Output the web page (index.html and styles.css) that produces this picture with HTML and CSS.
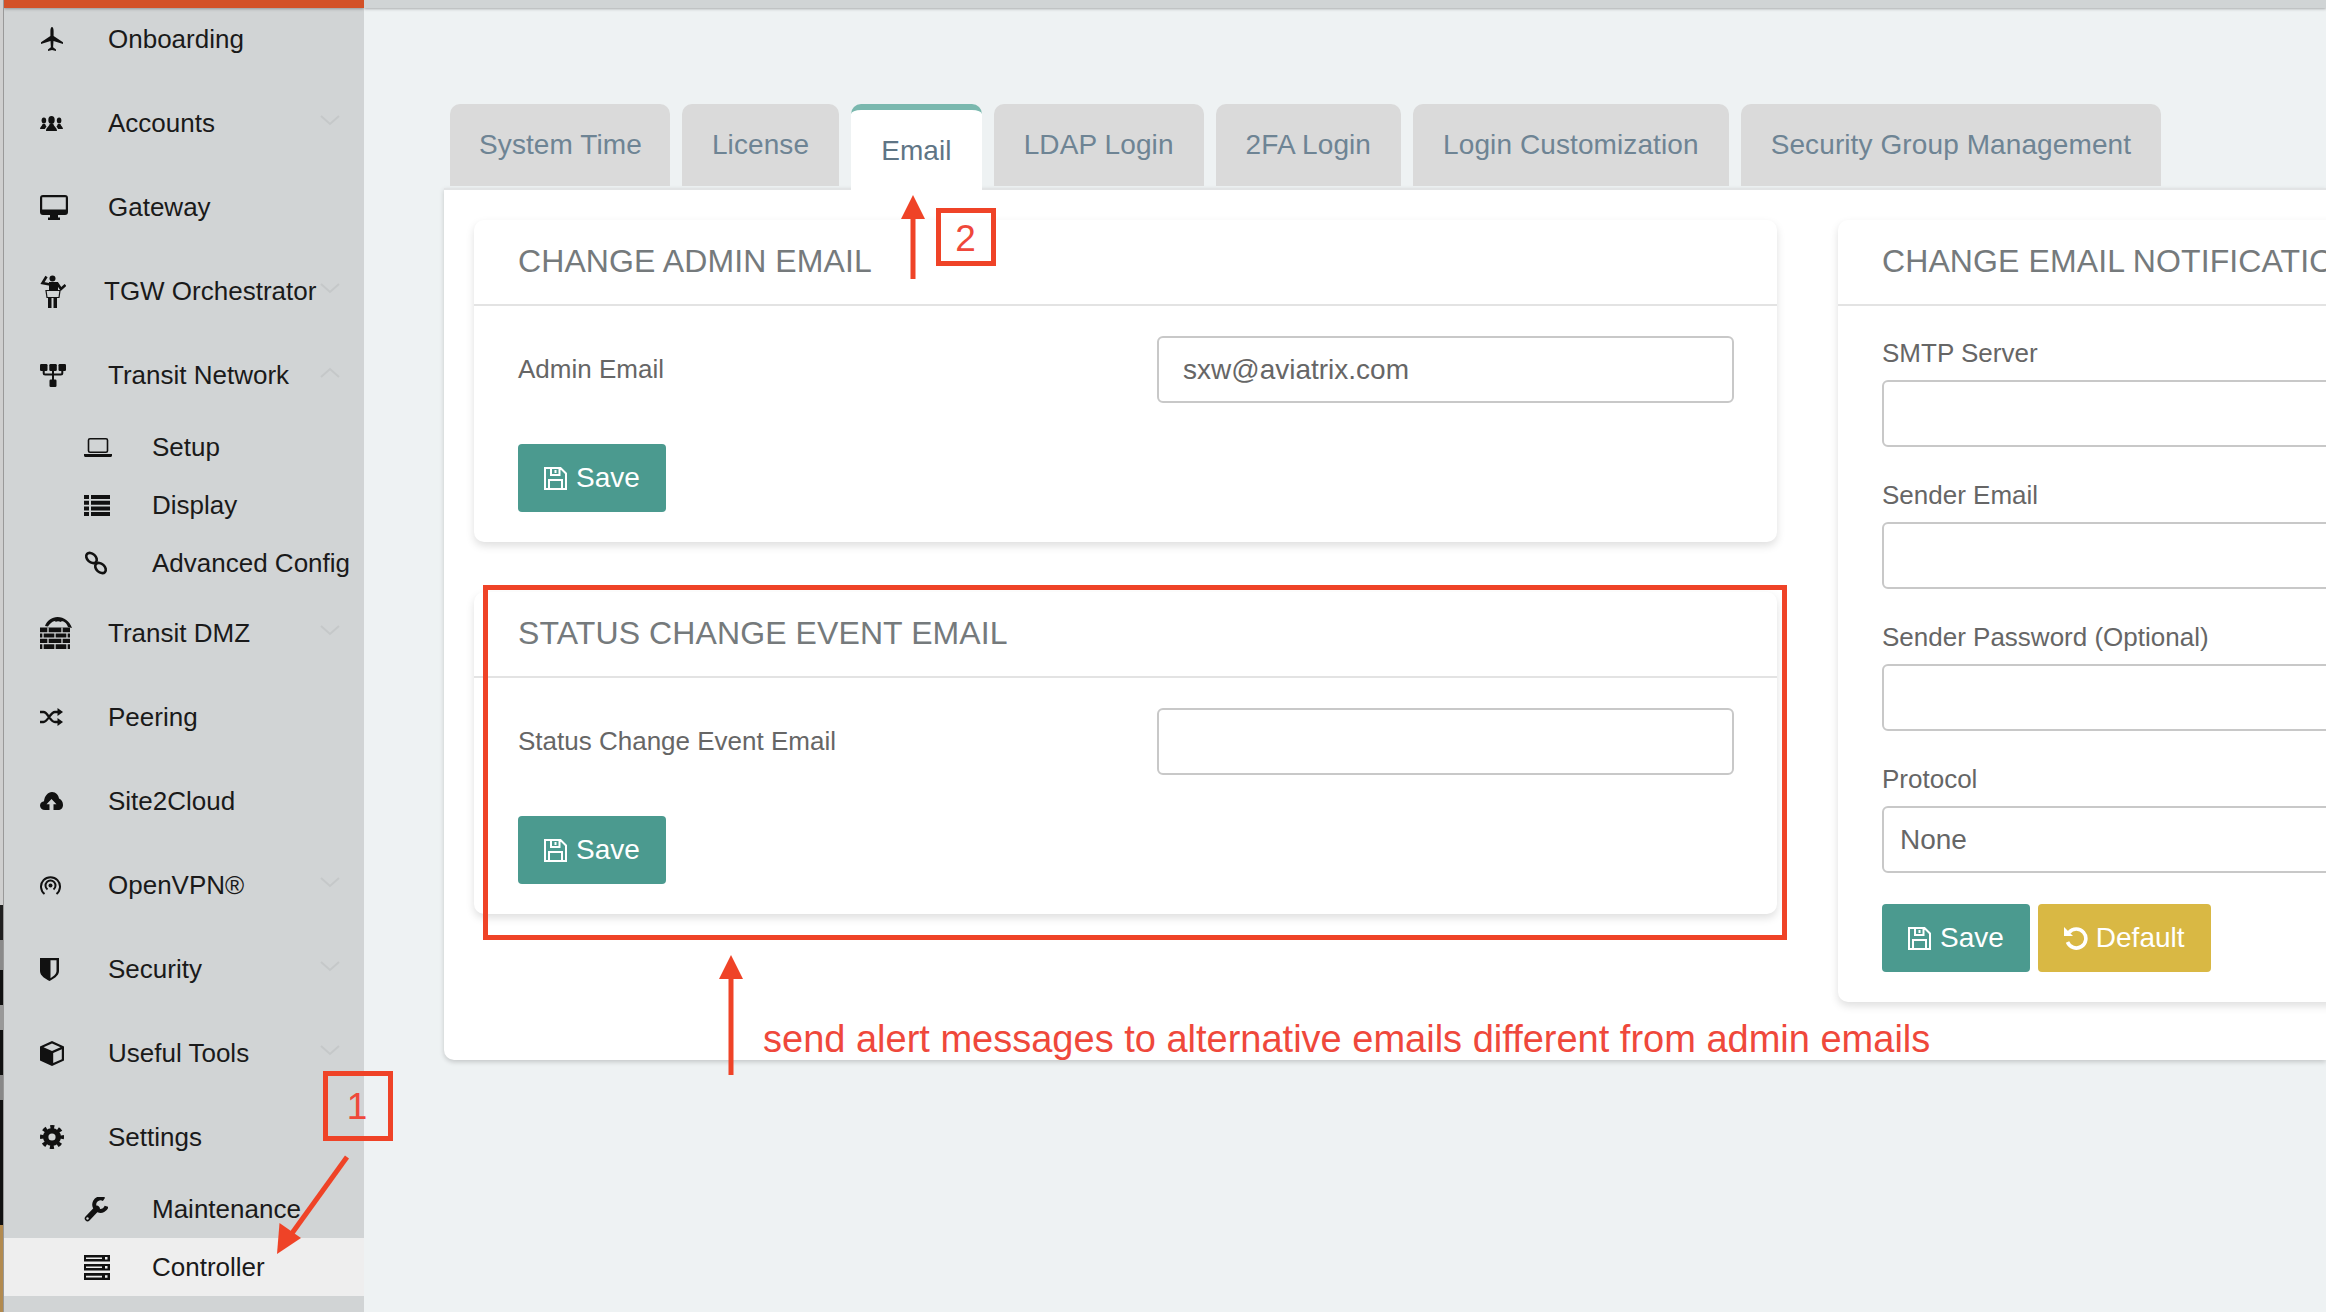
FILE: index.html
```html
<!DOCTYPE html>
<html lang="en">
<head>
    <meta charset="UTF-8">
    <meta name="viewport" content="width=device-width, initial-scale=1.0">
    <title>Controller Settings - Email</title>
    <link rel="stylesheet" href="styles.css">
</head>
<body>
    <div class="screen-edge"></div>

    <aside class="sidebar">
        <div class="brand-bar"></div>
        <ul class="menu">
            <li class="menu-item">
                <svg class="menu-icon" width="24" height="24" viewBox="0 0 24 24"><path d="M12 0c1 0 1.600 2 1.600 4v5L23 15.200v1.900l-9.500-3-.4 6.200 2.900 2.300V24L12 23.100 8 24v-1.400l2.900-2.300-.4-6.200-9.500 3v-1.900L10.400 9V4c0-2 .6-4 1.600-4z"/></svg>
                <span>Onboarding</span>
            </li>
            <li class="menu-item">
                <svg class="menu-icon" width="23" height="15" viewBox="0 0 23 15"><ellipse cx="11.500" cy="4" rx="3.200" ry="4"/><path d="M6 15c0-3.500 3-4.500 3.600-7h3.800c.6 2.500 3.600 3.500 3.600 7z"/><ellipse cx="3.900" cy="4.500" rx="2.300" ry="3"/><path d="M0 13c0-2 2-2.800 2.600-5h2.600c.2 1.500 1.300 2.500 1.300 2.500L4.800 13z"/><ellipse cx="19.100" cy="4.500" rx="2.300" ry="3"/><path d="M23 13c0-2-2-2.800-2.600-5h-2.600c-.2 1.500-1.300 2.500-1.300 2.500l1.700 2.500z"/></svg>
                <span>Accounts</span>
                <svg class="chevron" width="20" height="11" viewBox="0 0 20 11"><path d="M1 1l9 8 9-8"/></svg>
            </li>
            <li class="menu-item">
                <svg class="menu-icon" width="28" height="25" viewBox="0 0 28 25"><path fill-rule="evenodd" d="M3 0h22a3 3 0 0 1 3 3v14a3 3 0 0 1-3 3H3a3 3 0 0 1-3-3V3a3 3 0 0 1 3-3zm-.8 2.200v12.300h23.600V2.200z"/><path d="M10 20h8v2.500h2V25H8v-2.500h2z"/></svg>
                <span>Gateway</span>
            </li>
            <li class="menu-item menu-item-tgw">
                <svg class="menu-icon" width="26" height="33" viewBox="0 0 26 33"><circle cx="12.500" cy="3.500" r="3"/><path d="M9 7h9v8H9z"/><path class="line" d="M10 9.500L2.500 8l4-6.500" stroke-width="2.600"/><path class="line" d="M17 8l4 6 4.500-4" stroke-width="2.600"/><path class="line" d="M6 15.500h14l-1 7H7z" stroke-width="1.200"/><path d="M8 22.500h3.500V33H8zM13.500 22.500H17V33h-3.500z"/></svg>
                <span>TGW Orchestrator</span>
                <svg class="chevron" width="20" height="11" viewBox="0 0 20 11"><path d="M1 1l9 8 9-8"/></svg>
            </li>
            <li class="menu-item">
                <svg class="menu-icon" width="26" height="23" viewBox="0 0 26 23"><rect width="7.500" height="7" rx="1.200"/><rect x="9.300" width="7.500" height="7" rx="1.200"/><rect x="18.500" width="7.500" height="7" rx="1.200"/><rect x="9.500" y="15.500" width="7" height="7.500" rx="1.200"/><path class="line" d="M3.700 6v3c0 1 .6 1.500 1.500 1.500h15.600c.9 0 1.500-.5 1.500-1.500V6M13 6v10" stroke-width="2"/></svg>
                <span>Transit Network</span>
                <svg class="chevron" width="20" height="11" viewBox="0 0 20 11"><path d="M1 10l9-8 9 8"/></svg>
            </li>
            <li>
                <ul class="submenu">
                    <li class="submenu-item">
                        <svg class="menu-icon" width="28" height="19" viewBox="0 0 28 19"><rect class="line" x="4.500" y=".8" width="19" height="13.500" rx="1.500" stroke-width="1.600"/><path d="M0 16h28v1.500c0 .8-.6 1.500-1.500 1.500h-25C.6 19 0 18.300 0 17.500z"/></svg>
                        <span>Setup</span>
                    </li>
                    <li class="submenu-item">
                        <svg class="menu-icon" width="26" height="21" viewBox="0 0 26 21"><path d="M0 0h5v4H0zM7 0h19v4H7zM0 5.700h5v4H0zM7 5.700h19v4H7zM0 11.400h5v4H0zM7 11.400h19v4H7zM0 17h5v4H0zM7 17h19v4H7z"/></svg>
                        <span>Display</span>
                    </li>
                    <li class="submenu-item">
                        <svg class="menu-icon" width="24" height="24" viewBox="0 0 24 24"><ellipse class="line" cx="7.500" cy="7" rx="6" ry="4.200" transform="rotate(42 7.500 7)" stroke-width="2.600"/><ellipse class="line" cx="16.500" cy="17" rx="6" ry="4.200" transform="rotate(42 16.500 17)" stroke-width="2.600"/></svg>
                        <span>Advanced Config</span>
                    </li>
                </ul>
            </li>
            <li class="menu-item">
                <svg class="menu-icon" width="32" height="32" viewBox="0 0 32 32"><path d="M5 9C7 3.500 12 0 17.500 0 24 0 29.500 4 32 11l-4-1c-1-3-3-5-4.500-5.500C21 3 16 3 13 4.500 10.500 6 9 8 8 9.500z"/><path d="M15 2c3-1 6-1 8 .5L21 5c-2-1-4-1-5.500 0z"/><path d="M0 10.500h30V32H0z"/><path class="mortar" d="M0 15.800h30M0 21.200h30M0 26.700h30M8 10.500v5.300M22 10.500v5.300M3 15.800v5.400M15 15.800v5.400M27 15.800v5.400M8 21.200v5.500M22 21.200v5.500M3 26.700V32M15 26.700V32M27 26.700V32"/></svg>
                <span>Transit DMZ</span>
                <svg class="chevron" width="20" height="11" viewBox="0 0 20 11"><path d="M1 1l9 8 9-8"/></svg>
            </li>
            <li class="menu-item">
                <svg class="menu-icon" width="23" height="18" viewBox="0 0 23 18"><path class="line" d="M0 4h3.500C8 4 10 14 15 14h3M0 14h3.500C8 14 10 4 15 4h3" stroke-width="2.300"/><path d="M17.500 0L23 4l-5.500 4zM17.500 10l5.500 4-5.500 4z"/></svg>
                <span>Peering</span>
            </li>
            <li class="menu-item">
                <svg class="menu-icon" width="23" height="18" viewBox="0 0 23 18"><path d="M5 18c-3 0-5-2-5-4.500S2 9.500 4 9.300C4.500 4 8 0 12 0c4 0 6.500 3 7 6.500 2.500 1 4 3.500 4 6.500s-2 5-5 5z"/><path class="cut" d="M11.500 7l5 5.200h-3V18h-4v-5.800h-3z"/></svg>
                <span>Site2Cloud</span>
            </li>
            <li class="menu-item">
                <svg class="menu-icon" width="21" height="20" viewBox="0 0 21 20"><path class="line" d="M4.500 19a9.500 9.500 0 1 1 12 0" stroke-width="2"/><path class="line" d="M7.500 14.500a5 5 0 1 1 6 0" stroke-width="2"/><circle cx="10.500" cy="10.500" r="2"/></svg>
                <span>OpenVPN®</span>
                <svg class="chevron" width="20" height="11" viewBox="0 0 20 11"><path d="M1 1l9 8 9-8"/></svg>
            </li>
            <li class="menu-item">
                <svg class="menu-icon" width="19" height="23" viewBox="0 0 19 23"><path d="M0 0h19v13c0 5-6 8-9.500 10C6 21 0 18 0 13z"/><path class="cut" d="M10.500 2.300h6V13c0 3-3.500 5.700-6 7.200z"/></svg>
                <span>Security</span>
                <svg class="chevron" width="20" height="11" viewBox="0 0 20 11"><path d="M1 1l9 8 9-8"/></svg>
            </li>
            <li class="menu-item">
                <svg class="menu-icon" width="24" height="25" viewBox="0 0 24 25"><path d="M12 0l12 5.500v14L12 25 0 19.500v-14z"/><path class="cut" d="M12 2.500l8.500 3.800L12 10 3.500 6.300zM13.200 12l8.600-3.800v10l-8.600 3.900z"/></svg>
                <span>Useful Tools</span>
                <svg class="chevron" width="20" height="11" viewBox="0 0 20 11"><path d="M1 1l9 8 9-8"/></svg>
            </li>
            <li class="menu-item">
                <svg class="menu-icon" width="24" height="24" viewBox="0 0 24 24"><circle cx="12" cy="12" r="9"/><circle class="line" cx="12" cy="12" r="10" stroke-width="4" stroke-dasharray="4 3.850" stroke-dashoffset="2"/><circle class="cut" cx="12" cy="12" r="3.600"/></svg>
                <span>Settings</span>
            </li>
            <li>
                <ul class="submenu">
                    <li class="submenu-item">
                        <svg class="menu-icon" width="24" height="25" viewBox="0 0 24 25"><path class="line" d="M3.500 21.500l9.500-10" stroke-width="5.500" stroke-linecap="round"/><path class="line" d="M20 2.300a6.300 6.300 0 1 0 2.600 7" stroke-width="4"/><circle class="cut" cx="3.500" cy="21.500" r="1.200"/></svg>
                        <span>Maintenance</span>
                    </li>
                    <li class="submenu-item active">
                        <svg class="menu-icon" width="26" height="25" viewBox="0 0 26 25"><rect width="26" height="6.500"/><rect y="9" width="26" height="6.500"/><rect y="18" width="26" height="7"/><path class="strip" d="M2 2.500h16v1.600H2zM2 11.500h16v1.600H2zM2 20.800h16v1.600H2zM21 2h2.500v2.500H21zM21 11h2.500v2.500H21zM21 20.300h2.500v2.500H21z"/></svg>
                        <span>Controller</span>
                    </li>
                </ul>
            </li>
        </ul>
    </aside>

    <main class="main">
        <div class="topbar"></div>

        <ul class="tabs">
            <li class="tab">System Time</li>
            <li class="tab">License</li>
            <li class="tab active">Email</li>
            <li class="tab">LDAP Login</li>
            <li class="tab">2FA Login</li>
            <li class="tab">Login Customization</li>
            <li class="tab">Security Group Management</li>
        </ul>

        <section class="panel">
            <div class="column">
                <div class="card">
                    <h3 class="card-title">CHANGE ADMIN EMAIL</h3>
                    <form class="card-body">
                        <div class="inline-field">
                            <label for="admin-email">Admin Email</label>
                            <input type="text" id="admin-email" value="sxw@aviatrix.com">
                        </div>
                        <div class="actions">
                            <button type="button" class="btn btn-save">
                                <svg class="btn-icon" width="23" height="23" viewBox="0 0 23 23"><path d="M1 1h15.500L22 6.500V22H1zM7 1v7h8.500V1M5 22v-9h13v9M11.500 3v3"/></svg>
                                Save
                            </button>
                        </div>
                    </form>
                </div>

                <div class="card">
                    <h3 class="card-title">STATUS CHANGE EVENT EMAIL</h3>
                    <form class="card-body">
                        <div class="inline-field">
                            <label for="event-email">Status Change Event Email</label>
                            <input type="text" id="event-email">
                        </div>
                        <div class="actions">
                            <button type="button" class="btn btn-save">
                                <svg class="btn-icon" width="23" height="23" viewBox="0 0 23 23"><path d="M1 1h15.500L22 6.500V22H1zM7 1v7h8.500V1M5 22v-9h13v9M11.500 3v3"/></svg>
                                Save
                            </button>
                        </div>
                    </form>
                </div>
            </div>

            <div class="column">
                <div class="card">
                    <h3 class="card-title">CHANGE EMAIL NOTIFICATION</h3>
                    <form class="card-body">
                        <div class="field">
                            <label for="smtp">SMTP Server</label>
                            <input type="text" id="smtp">
                        </div>
                        <div class="field">
                            <label for="sender">Sender Email</label>
                            <input type="text" id="sender">
                        </div>
                        <div class="field">
                            <label for="sender-pass">Sender Password (Optional)</label>
                            <input type="text" id="sender-pass">
                        </div>
                        <div class="field">
                            <label for="protocol">Protocol</label>
                            <select id="protocol"><option>None</option></select>
                        </div>
                        <div class="actions">
                            <button type="button" class="btn btn-save">
                                <svg class="btn-icon" width="23" height="23" viewBox="0 0 23 23"><path d="M1 1h15.500L22 6.500V22H1zM7 1v7h8.500V1M5 22v-9h13v9M11.500 3v3"/></svg>
                                Save
                            </button>
                            <button type="button" class="btn btn-default">
                                <svg class="btn-icon-solid" width="24" height="24" viewBox="0 0 24 24"><path class="undo-arc" d="M5 6.500a9.500 9.500 0 1 1-1.500 9.500"/><path d="M0 1v9h9z"/></svg>
                                Default
                            </button>
                        </div>
                    </form>
                </div>
            </div>
        </section>
    </main>

    <!-- red notes drawn over the screenshot -->
    <svg class="note-arrows" width="2326" height="1312" viewBox="0 0 2326 1312">
        <path class="note-line" d="M347 1157L290 1236"/>
        <path class="note-head" d="M277 1254l2.500-31 21.500 15z"/>
        <path class="note-line" d="M913 279V215"/>
        <path class="note-head" d="M913 195l12 24h-24z"/>
        <path class="note-line" d="M731 1075V975"/>
        <path class="note-head" d="M731 955l12 24h-24z"/>
    </svg>
    <div class="note-box note-box-1">1</div>
    <div class="note-box note-box-2">2</div>
    <div class="note-box note-box-3"></div>
    <div class="note-text">send alert messages to alternative emails different from admin emails</div>
</body>
</html>
```

FILE: styles.css
```css
* {
    box-sizing: border-box;
}

html,
body {
    height: 100%;
}

body {
    display: flex;
    margin: 0;
    overflow: hidden;
    position: relative;
    font-family: "Liberation Sans", Arial, sans-serif;
    font-size: 26px;
    background-color: #eef2f3;
}

ul {
    list-style: none;
    margin: 0;
    padding: 0;
}

.screen-edge {
    flex: 0 0 4px;
    border-right: 1px solid #999;
    background: linear-gradient(#cfcfcf 0, #cfcfcf 905px, #202020 905px, #202020 940px, #8a8a8a 940px, #8a8a8a 970px, #111 970px, #111 1005px, #999 1005px, #999 1030px, #111 1030px, #111 1075px, #888 1075px, #888 1100px, #111 1100px, #111 1225px, #b28a4f 1225px);
}

/* sidebar */
.sidebar {
    flex: 0 0 360px;
    background-color: #d1d4d5;
    color: #1a1a1a;
    overflow: hidden;
}

.brand-bar {
    position: relative;
    z-index: 1;
    height: 8px;
    background-color: #d35127;
    box-shadow: 0 1px 3px rgba(0, 0, 0, 0.3);
}

.menu {
    margin-top: -11px;
}

.menu-item,
.submenu-item {
    display: grid;
    grid-template-columns: 68px 1fr auto;
    align-items: center;
    line-height: 1;
    white-space: nowrap;
}

.menu-item {
    height: 84px;
    padding: 0 24px 0 36px;
}

.menu-item-tgw span {
    margin-left: -4px;
}

.menu-icon {
    fill: #111;
}

.submenu {
    padding-top: 1px;
    margin-bottom: -1px;
}

.submenu-item {
    height: 58px;
    padding-left: 80px;
}

.submenu-item.active {
    background-color: #eeeeee;
}

.chevron {
    margin-top: -6px;
    fill: none;
    stroke: #c5c8c9;
    stroke-width: 2;
}

.line {
    fill: none;
    stroke: #111;
}

.cut {
    fill: #d1d4d5;
}

.strip {
    fill: #eeeeee;
}

.mortar {
    fill: none;
    stroke: #d1d4d5;
    stroke-width: 1.3;
}

/* main area */
.main {
    flex: 1;
    min-width: 0;
    overflow: hidden;
}

.topbar {
    height: 8px;
    background-color: #d0d4d5;
    box-shadow: 0 1px 3px rgba(0, 0, 0, 0.3);
}

.tabs {
    display: flex;
    align-items: flex-start;
    gap: 12px;
    height: 84px;
    margin: 96px 0 0 79px;
    padding-left: 7px;
}

.tab {
    position: relative;
    z-index: 1;
    height: 82px;
    padding: 0 30px;
    font-size: 28px;
    letter-spacing: 0.1px;
    line-height: 82px;
    border-radius: 10px 10px 0 0;
    background-color: #dadada;
    color: #6e8494;
    white-space: nowrap;
}

.tab:first-child {
    padding: 0 28px 0 29px;
}

.tab.active {
    height: 86px;
    line-height: 82px;
    border-top: 6px solid #7ab8ae;
    background-color: #fff;
    color: #5f7585;
}

.panel {
    display: grid;
    grid-template-columns: 1303px 800px;
    column-gap: 61px;
    margin-left: 80px;
    padding: 30px 0 58px 30px;
    border-top: 2px solid #e2e4e5;
    border-bottom-left-radius: 10px;
    background-color: #fff;
    box-shadow: 0 2px 5px rgba(0, 0, 0, 0.18);
}

.column {
    display: flex;
    flex-direction: column;
    gap: 50px;
}

.card {
    border-radius: 10px;
    background-color: #fff;
    box-shadow: 0 4px 8px rgba(0, 0, 0, 0.13);
}

.card-title {
    height: 86px;
    margin: 0;
    padding: 0 44px;
    border-bottom: 2px solid #e3e3e3;
    font-size: 32px;
    font-weight: normal;
    letter-spacing: 0.1px;
    line-height: 82px;
    color: #757a7c;
    white-space: nowrap;
}

.card-body {
    padding: 30px 43px 30px 44px;
}

label {
    color: #666;
}

input,
select {
    width: 100%;
    height: 67px;
    padding: 0 24px;
    border: 2px solid #c8c8c8;
    border-radius: 6px;
    background-color: #fff;
    font-family: inherit;
    font-size: 28px;
    color: #666;
}

select {
    padding: 0 16px;
    appearance: none;
}

.inline-field {
    display: grid;
    grid-template-columns: 1fr 577px;
    align-items: center;
}

.field {
    margin-bottom: 33px;
}

.field:first-child {
    padding-top: 2px;
}

.field label {
    display: block;
    margin-bottom: 12px;
    line-height: 30px;
}

.actions {
    display: flex;
    gap: 8px;
    margin-top: 41px;
}

.field + .actions {
    margin-top: -2px;
}

.btn {
    display: flex;
    align-items: center;
    gap: 9px;
    height: 68px;
    padding: 0 26px;
    border: none;
    border-radius: 4px;
    font-family: inherit;
    font-size: 28px;
    color: #fff;
}

.btn-save {
    background-color: #4b9a8f;
}

.btn-default {
    gap: 8px;
    background-color: #d9b844;
}

.btn-icon {
    fill: none;
    stroke: #fff;
    stroke-width: 2;
}

.btn-icon-solid {
    fill: #fff;
}

.undo-arc {
    fill: none;
    stroke: #fff;
    stroke-width: 3.6;
}

/* annotations */
.note-arrows {
    position: absolute;
    top: 0;
    left: 0;
    z-index: 2;
    pointer-events: none;
}

.note-line {
    fill: none;
    stroke: #ef4327;
    stroke-width: 5;
}

.note-head {
    fill: #ef4327;
}

.note-box {
    position: absolute;
    z-index: 2;
    display: flex;
    align-items: center;
    justify-content: center;
    border: 5px solid #ef4327;
    font-size: 37px;
    color: #ef483b;
}

.note-box-1 {
    top: 1071px;
    left: 323px;
    width: 70px;
    height: 70px;
    padding: 2px 2px 0 0;
}

.note-box-2 {
    top: 208px;
    left: 936px;
    width: 60px;
    height: 58px;
    padding: 3px 1px 0 0;
}

.note-box-3 {
    top: 585px;
    left: 483px;
    width: 1304px;
    height: 355px;
}

.note-text {
    position: absolute;
    top: 1017px;
    left: 763px;
    z-index: 2;
    font-size: 38px;
    line-height: 44px;
    color: #ef483b;
    white-space: nowrap;
}
```
